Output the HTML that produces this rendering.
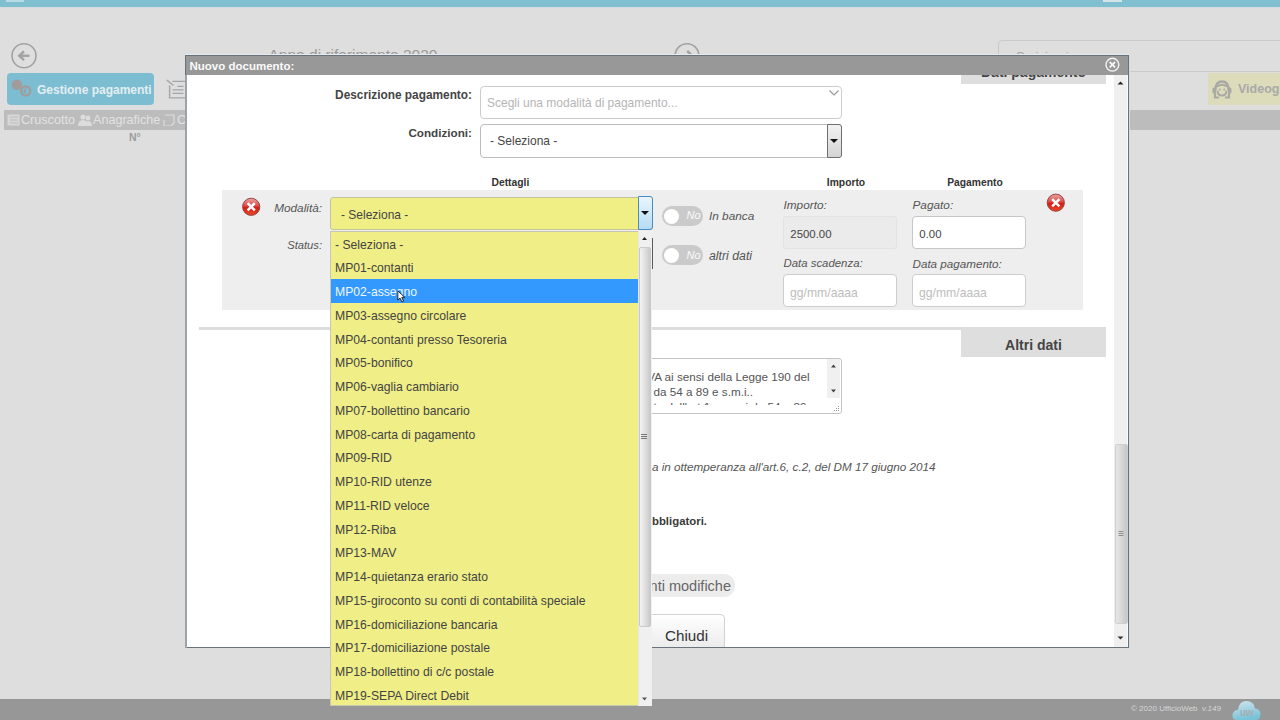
<!DOCTYPE html>
<html><head><meta charset="utf-8">
<style>
*{box-sizing:border-box;margin:0;padding:0}
html,body{width:1280px;height:720px;overflow:hidden;background:#dedede;font-family:"Liberation Sans",sans-serif;}
.a{position:absolute}
.t{position:absolute;white-space:pre;line-height:1}
</style></head><body>
<!-- ===== background page ===== -->
<div class="a" style="left:0;top:0;width:1280px;height:7px;background:#80bfcf"></div>
<div class="a" style="left:6px;top:0;width:18px;height:2px;background:#b9dde6"></div>
<div class="a" style="left:1103px;top:0;width:19px;height:2px;background:#d4e4e8"></div>
<div class="a" style="left:0;top:7px;width:1280px;height:1px;background:#d6dcde"></div>

<!-- back circle -->
<svg class="a" style="left:8.75px;top:41px" width="30" height="30" viewBox="0 0 30 30">
 <circle cx="15" cy="14.75" r="12" fill="none" stroke="#a2a2a2" stroke-width="1.6"/>
 <path d="M10.5 14.75 H20.5" fill="none" stroke="#a2a2a2" stroke-width="2.4"/>
 <path d="M15 10.3 L10.2 14.75 L15 19.2" fill="none" stroke="#a2a2a2" stroke-width="2.4"/>
</svg>
<div class="t" style="left:268.5px;top:47.3px;font-size:15.5px;color:#9a9a9a">Anno di riferimento 2020</div>
<svg class="a" style="left:672px;top:40px" width="30" height="30" viewBox="0 0 30 30">
 <circle cx="15" cy="15.5" r="11.8" fill="none" stroke="#a2a2a2" stroke-width="1.6"/>
 <path d="M9.5 15.5 H19.8" fill="none" stroke="#a2a2a2" stroke-width="2.4"/><path d="M15.2 11 L20 15.5 L15.2 20" fill="none" stroke="#a2a2a2" stroke-width="2.4"/>
</svg>
<div class="a" style="left:997.5px;top:39.5px;width:300px;height:32.5px;border:1px solid #c9c9c9;border-radius:4px"></div>
<div class="t" style="left:1016px;top:49.5px;font-size:13px;color:#a5a5a5">Scrivi qui...</div>

<div class="a" style="left:7px;top:73px;width:147px;height:31.5px;background:#7cbdd1;border-radius:4px"></div>
<svg class="a" style="left:10px;top:78px" width="26" height="22" viewBox="0 0 26 22">
 <circle cx="6.8" cy="6.7" r="5.2" fill="#a39b9b"/>
 <circle cx="15.75" cy="12.9" r="6" fill="#7cbdd1"/>
 <circle cx="15.75" cy="12.9" r="4.6" fill="none" stroke="#a39b9b" stroke-width="2.2"/>
 <path d="M16.5 10.5 Q14.3 10.3 14.3 12.9 Q14.3 15.5 16.5 15.3 M13.5 12.2 H16 M13.5 13.6 H16" fill="none" stroke="#a39b9b" stroke-width="0.9"/>
</svg>
<div class="t" style="left:37px;top:84px;font-size:12px;font-weight:bold;color:#e4eef1">Gestione pagamenti</div>
<svg class="a" style="left:166px;top:79px" width="20" height="20" viewBox="0 0 20 20">
 <path d="M6.5 2.4 H20 M3.6 6.5 V18.9 H20" fill="none" stroke="#a5a5a5" stroke-width="1.4"/>
 <path d="M0.8 1 L7.5 6.5" stroke="#a5a5a5" stroke-width="1.5"/>
 <path d="M11.5 7.3 H17.5 M6.5 10.9 H17.5 M6.5 14.3 H17.5" stroke="#a5a5a5" stroke-width="1.3"/>
</svg>
<div class="a" style="left:4px;top:110px;width:1276px;height:20px;background:#bcbcbc"></div>
<svg class="a" style="left:7px;top:114px" width="13" height="12" viewBox="0 0 13 12"><rect x="0.5" y="0.5" width="12" height="11" fill="#d8d8d8"/><path d="M3 3H11M3 6H11M3 9H11" stroke="#bcbcbc"/></svg>
<div class="t" style="left:21px;top:114px;font-size:12.6px;color:#e2e2e2">Cruscotto</div>
<svg class="a" style="left:78px;top:114px" width="14" height="12" viewBox="0 0 14 12"><circle cx="5" cy="3" r="2.6" fill="#dcdcdc"/><circle cx="10" cy="4" r="2.4" fill="#dcdcdc"/><path d="M0 12 Q0 6 5 6 Q10 6 10 12Z M7 12 Q8 7 10 7 Q14 7 14 12Z" fill="#dcdcdc"/></svg>
<div class="t" style="left:93px;top:114px;font-size:12.6px;color:#e2e2e2">Anagrafiche</div>
<svg class="a" style="left:162px;top:114px" width="14" height="12" viewBox="0 0 14 12"><path d="M3 1H12V9L9 12H2V6" fill="none" stroke="#dcdcdc" stroke-width="1.2"/></svg>
<div class="t" style="left:177px;top:114px;font-size:12.6px;color:#e2e2e2">C</div>
<div class="t" style="left:129px;top:132px;font-size:10.5px;font-weight:bold;color:#9c9c9c">N°</div>

<div class="a" style="left:1208px;top:72.5px;width:80px;height:32px;background:#dcdcba"></div>
<svg class="a" style="left:1211px;top:78px" width="22" height="22" viewBox="0 0 22 22">
 <path d="M4.5 12 Q4.5 3.5 11 3.5 Q17.5 3.5 17.5 12" fill="none" stroke="#a9a9a4" stroke-width="2.4"/>
 <rect x="1.5" y="9.5" width="3.5" height="6" rx="1.5" fill="#a9a9a4"/><rect x="17" y="9.5" width="3.5" height="6" rx="1.5" fill="#a9a9a4"/>
 <path d="M6.5 12.5 Q6.5 17.5 11 17.5 Q15.5 17.5 15.5 12.5" fill="none" stroke="#a9a9a4" stroke-width="2"/>
 <path d="M6 8.5 Q11 5 16 8.5" fill="none" stroke="#a9a9a4" stroke-width="2"/>
 <circle cx="8.8" cy="11.5" r="1" fill="#a9a9a4"/><circle cx="13.2" cy="11.5" r="1" fill="#a9a9a4"/>
 <path d="M4 15 V19.5 H8 M18 15 V19.5 H14" fill="none" stroke="#a9a9a4" stroke-width="2.2"/>
</svg>
<div class="t" style="left:1238px;top:83px;font-size:12.5px;font-weight:bold;color:#a9a9a9">Videoguida</div>

<div class="a" style="left:0;top:699px;width:1280px;height:21px;background:#979797"></div>
<div class="t" style="left:1131px;top:705px;font-size:8px;color:#d6d6d6">© 2020 UfficioWeb &nbsp;<i>v.149</i></div>
<svg class="a" style="left:1232px;top:699px" width="29" height="21" viewBox="0 0 29 21">
 <defs><linearGradient id="cg" x1="0" y1="0" x2="0.3" y2="1"><stop offset="0" stop-color="#d2e6ec"/><stop offset="1" stop-color="#78c3d8"/></linearGradient></defs>
 <path d="M5 21 Q0 21 0.5 15.5 Q1.5 11 6 11 Q7 2 14.5 2 Q22 2 23 9.5 Q28.5 10 28.5 15.5 Q28.5 21 23 21Z" fill="url(#cg)"/>
 <text x="14.5" y="17" font-size="10" font-weight="bold" text-anchor="middle" fill="#a6aeb2" font-family="Liberation Sans" letter-spacing="-0.5">uw</text>
</svg>

<!-- ===== dialog ===== -->
<div class="a" style="left:185px;top:55px;width:944px;height:593px;background:#fff;border:1px solid #6a737b;box-shadow:0 -1px 0 #e6eaed, 1px 0 0 #d5dade"></div>
<div class="a" style="left:186px;top:56px;width:942px;height:19px;background:#989898"></div>
<div class="t" style="left:189.5px;top:61px;font-size:11.5px;font-weight:bold;color:#fafafa">Nuovo documento:</div>
<svg class="a" style="left:1103px;top:56.3px" width="18" height="18" viewBox="0 0 18 18">
 <circle cx="9.4" cy="8.7" r="6.4" fill="none" stroke="#f4f4f4" stroke-width="1.4"/>
 <path d="M6.7 6 L12.1 11.4 M12.1 6 L6.7 11.4" stroke="#f4f4f4" stroke-width="1.8"/>
</svg>
<!-- CONTENT -->
<div class="a" style="left:186px;top:75px;width:928px;height:572px;overflow:hidden">
 <div class="a" style="left:775px;top:-22px;width:145px;height:31px;background:#dedede"></div>
 <div class="t" style="left:775px;top:-9.7px;width:145px;text-align:center;font-size:14px;font-weight:bold;color:#444">Dati pagamento</div>
</div>
<div class="t" style="left:300px;top:89.6px;width:172px;text-align:right;font-size:11.85px;font-weight:bold;color:#444">Descrizione pagamento:</div>
<div class="a" style="left:479.5px;top:85.5px;width:362px;height:33px;border:1px solid #cccccc;border-radius:4px;background:#fff"></div>
<div class="t" style="left:486.5px;top:97px;font-size:12.9px;transform:scaleX(0.93);transform-origin:0 0;color:#b5b5b5">Scegli una modalità di pagamento...</div>
<svg class="a" style="left:828px;top:89px" width="12" height="8" viewBox="0 0 12 8"><path d="M1.5 1.5 L6 6 L10.5 1.5" fill="none" stroke="#9a9a9a" stroke-width="1.2"/></svg>
<div class="t" style="left:300px;top:126.5px;width:172px;text-align:right;font-size:11.7px;font-weight:bold;color:#444">Condizioni:</div>
<div class="a" style="left:479.5px;top:123.5px;width:362px;height:34px;border:1px solid #bdbdbd;border-radius:4px;background:#fff"></div>
<div class="t" style="left:490px;top:134.5px;font-size:12.9px;transform:scaleX(0.93);transform-origin:0 0;color:#444">- Seleziona -</div>
<div class="a" style="left:827px;top:124px;width:14.5px;height:33.5px;border:1px solid #6f6f6f;border-radius:0 3px 3px 0;background:linear-gradient(#f2f2f2,#d4d4d4)"></div>
<svg class="a" style="left:830px;top:138px" width="8" height="6" viewBox="0 0 8 6"><path d="M0 1 H8 L4 5Z" fill="#111"/></svg>

<div class="t" style="left:491.5px;top:178px;font-size:10.3px;font-weight:bold;color:#333">Dettagli</div>
<div class="t" style="left:796px;top:178px;width:100px;text-align:center;font-size:10.3px;font-weight:bold;color:#333">Importo</div>
<div class="t" style="left:925px;top:178px;width:100px;text-align:center;font-size:10.3px;font-weight:bold;color:#333">Pagamento</div>

<div class="a" style="left:222px;top:189.5px;width:860.5px;height:120px;background:#eeeeee"></div>
<svg class="a" style="left:240px;top:196px" width="22" height="22" viewBox="0 0 22 22">
 <defs><linearGradient id="rg" x1="0" y1="0" x2="0" y2="1"><stop offset="0" stop-color="#e8a6a6"/><stop offset="0.45" stop-color="#de4a48"/><stop offset="0.55" stop-color="#d21c14"/><stop offset="1" stop-color="#ee4a2a"/></linearGradient></defs>
 <circle cx="11.2" cy="10.8" r="8.6" fill="url(#rg)" stroke="#8e3a3a" stroke-width="0.9"/>
 <path d="M7.6 7.2 L14.8 14.4 M14.8 7.2 L7.6 14.4" stroke="#fff" stroke-width="2.5"/>
</svg>
<svg class="a" style="left:1045px;top:192px" width="22" height="22" viewBox="0 0 22 22">
 <circle cx="10.8" cy="10.7" r="8.6" fill="url(#rg)" stroke="#8e3a3a" stroke-width="0.9"/>
 <path d="M7.2 7.1 L14.4 14.3 M14.4 7.1 L7.2 14.3" stroke="#fff" stroke-width="2.5"/>
</svg>
<div class="t" style="left:222px;top:203.3px;width:100px;text-align:right;font-size:11.8px;font-style:italic;color:#555">Modalità:</div>
<div class="t" style="left:222px;top:240px;width:100px;text-align:right;font-size:11.2px;font-style:italic;color:#555">Status:</div>

<div class="a" style="left:330px;top:196.5px;width:322.5px;height:33.5px;background:#f0ef86;border:1px solid #c2c29c;border-radius:3px"></div>
<div class="t" style="left:341px;top:209px;font-size:12.9px;transform:scaleX(0.93);transform-origin:0 0;color:#444">- Seleziona -</div>
<div class="a" style="left:638px;top:196px;width:14.5px;height:34px;border:1px solid #4a8bc0;border-radius:0 3px 3px 0;background:linear-gradient(#eaf5fc,#b5dcf4)"></div>
<svg class="a" style="left:641px;top:210px" width="8" height="6" viewBox="0 0 8 6"><path d="M0 1 H8 L4 5Z" fill="#111"/></svg>
<div class="a" style="left:652px;top:238px;width:1px;height:31px;background:#5a5a5a"></div>

<div class="a" style="left:661.5px;top:206px;width:41px;height:20.3px;border-radius:10px;background:#cacaca"></div>
<div class="a" style="left:663.5px;top:208.5px;width:15px;height:15px;border-radius:50%;background:#fff"></div>
<div class="t" style="left:686.5px;top:210px;font-size:11px;font-style:italic;color:#fafafa">No</div>
<div class="t" style="left:709px;top:211px;font-size:11.8px;font-style:italic;color:#555">In banca</div>
<div class="a" style="left:661.5px;top:245.3px;width:41px;height:20px;border-radius:10px;background:#cacaca"></div>
<div class="a" style="left:663.5px;top:247.8px;width:15px;height:15px;border-radius:50%;background:#fff"></div>
<div class="t" style="left:686.5px;top:249.5px;font-size:11px;font-style:italic;color:#fafafa">No</div>
<div class="t" style="left:709px;top:250px;font-size:12.3px;font-style:italic;color:#555">altri dati</div>

<div class="t" style="left:783.5px;top:199.5px;font-size:11.8px;font-style:italic;color:#555">Importo:</div>
<div class="a" style="left:783px;top:215.5px;width:113.5px;height:33.5px;background:#ebebeb;border:1px solid #e3e3e3;border-radius:3px"></div>
<div class="t" style="left:790.3px;top:228.5px;font-size:11.4px;color:#444">2500.00</div>
<div class="t" style="left:783.5px;top:257.5px;font-size:11.4px;font-style:italic;color:#555">Data scadenza:</div>
<div class="a" style="left:783px;top:274px;width:113.5px;height:32.5px;background:#fff;border:1px solid #cdcdcd;border-radius:4px"></div>
<div class="t" style="left:790px;top:286.5px;font-size:12.2px;color:#bdbdbd">gg/mm/aaaa</div>

<div class="t" style="left:912.5px;top:199.5px;font-size:11.8px;font-style:italic;color:#555">Pagato:</div>
<div class="a" style="left:912px;top:215.5px;width:113.5px;height:33.5px;background:#fff;border:1px solid #c6c6c6;border-radius:4px"></div>
<div class="t" style="left:919.3px;top:228.5px;font-size:11.4px;color:#444">0.00</div>
<div class="t" style="left:912.5px;top:257.5px;font-size:11.65px;font-style:italic;color:#555">Data pagamento:</div>
<div class="a" style="left:912px;top:274px;width:113.5px;height:32.5px;background:#fff;border:1px solid #cdcdcd;border-radius:4px"></div>
<div class="t" style="left:919px;top:286.5px;font-size:12.2px;color:#bdbdbd">gg/mm/aaaa</div>

<div class="a" style="left:199px;top:327px;width:762px;height:3px;background:#dcdcdc"></div>
<div class="a" style="left:961px;top:327px;width:145px;height:30px;background:#dedede"></div>
<div class="t" style="left:961px;top:337.5px;width:145px;text-align:center;font-size:14px;font-weight:bold;color:#444">Altri dati</div>

<div class="a" style="left:479.5px;top:358px;width:362px;height:56px;border:1px solid #c4c4c4;border-radius:3px;background:#fff"></div>
<div class="a" style="left:480.5px;top:359px;width:346px;height:46.3px;overflow:hidden">
 <div class="t" style="left:0;top:11.5px;width:329px;text-align:right;font-size:11.7px;color:#555">Scissione dei pagamenti IVA ai sensi della Legge 190 del</div>
 <div class="t" style="left:0;top:26.8px;width:272.5px;text-align:right;font-size:11.7px;color:#555">art.17 ter commi da 54 a 89 e s.m.i..</div>
 <div class="t" style="left:0;top:42.1px;width:326px;text-align:right;font-size:11.7px;color:#555">come modificato dall'art.1 commi da 54 a 89</div>
</div>
<div class="a" style="left:827px;top:359px;width:13px;height:39px;background:#f0f0f0"></div>
<svg class="a" style="left:829px;top:361px" width="9" height="36" viewBox="0 0 9 36"><path d="M2 6.5 H7 L4.5 3.5Z M2 28.5 H7 L4.5 31.5Z" fill="#444"/></svg>
<svg class="a" style="left:832px;top:405px" width="8" height="8" viewBox="0 0 8 8"><g fill="#9a9a9a"><rect x="6" y="1" width="1" height="1"/><rect x="4" y="3" width="1" height="1"/><rect x="6" y="3" width="1" height="1"/><rect x="2" y="5" width="1" height="1"/><rect x="4" y="5" width="1" height="1"/><rect x="6" y="5" width="1" height="1"/></g></svg>

<div class="t" style="left:652px;top:460.5px;font-size:11.7px;font-style:italic;color:#555">a in ottemperanza all'art.6, c.2, del DM 17 giugno 2014</div>
<div class="t" style="left:500px;top:515.7px;width:207px;text-align:right;font-size:11.4px;font-weight:bold;color:#3a3a3a">campi obbligatori.</div>

<div class="a" style="left:560px;top:574.4px;width:174.5px;height:23px;border-radius:11px;background:#ececec"></div>
<div class="t" style="left:500px;top:578.5px;width:231px;text-align:right;font-size:14.5px;color:#666">Annulla recenti modifiche</div>
<div class="a" style="left:560px;top:614.4px;width:165px;height:33px;border:1px solid #d2d2d2;border-bottom:none;border-radius:5px 5px 0 0;background:linear-gradient(#fff,#ececec)"></div>
<div class="t" style="left:665px;top:627.5px;font-size:15.2px;color:#333">Chiudi</div>

<!-- SCROLL -->
<div class="a" style="left:1114px;top:75px;width:14px;height:572px;background:#efefef;border-right:1px solid #fafafa"></div>
<svg class="a" style="left:1116px;top:79px" width="9" height="8" viewBox="0 0 9 8"><path d="M1.5 5.5 H7.5 L4.5 2.5Z" fill="#222"/></svg>
<div class="a" style="left:1114.5px;top:444px;width:13.5px;height:180px;border:1px solid #cfcfcf;border-radius:2px;background:linear-gradient(90deg,#e6e6e6,#d6d6d6 55%,#c6c6c6)"></div>
<svg class="a" style="left:1117px;top:530px" width="8" height="8" viewBox="0 0 8 8"><path d="M1.5 1.5H6.5M1.5 3.5H6.5M1.5 5.5H6.5" stroke="#888" stroke-width="0.9"/></svg>
<svg class="a" style="left:1116px;top:634px" width="9" height="8" viewBox="0 0 9 8"><path d="M1.5 2.5 H7.5 L4.5 5.5Z" fill="#333"/></svg>
<div class="a" style="left:185px;top:75px;width:2px;height:573px;background:#9ea3a7"></div>
<!-- DROPDOWN -->
<div class="a" style="left:329.5px;top:231px;width:322px;height:475px;background:#f0ee86;border:1px solid #c6c6b4;border-right:none"></div>
<div class="t" style="left:335.3px;top:238.50px;font-size:12.9px;transform:scaleX(0.945);transform-origin:0 0;color:#444">- Seleziona -</div>
<div class="t" style="left:335.3px;top:262.25px;font-size:12.9px;transform:scaleX(0.945);transform-origin:0 0;color:#444">MP01-contanti</div>
<div class="a" style="left:330.5px;top:279.25px;width:307px;height:23.6px;background:#3399ff"></div>
<div class="t" style="left:335.3px;top:286.00px;font-size:12.9px;transform:scaleX(0.945);transform-origin:0 0;color:#eef7ff">MP02-assegno</div>
<div class="t" style="left:335.3px;top:309.75px;font-size:12.9px;transform:scaleX(0.945);transform-origin:0 0;color:#444">MP03-assegno circolare</div>
<div class="t" style="left:335.3px;top:333.50px;font-size:12.9px;transform:scaleX(0.945);transform-origin:0 0;color:#444">MP04-contanti presso Tesoreria</div>
<div class="t" style="left:335.3px;top:357.25px;font-size:12.9px;transform:scaleX(0.945);transform-origin:0 0;color:#444">MP05-bonifico</div>
<div class="t" style="left:335.3px;top:381.00px;font-size:12.9px;transform:scaleX(0.945);transform-origin:0 0;color:#444">MP06-vaglia cambiario</div>
<div class="t" style="left:335.3px;top:404.75px;font-size:12.9px;transform:scaleX(0.945);transform-origin:0 0;color:#444">MP07-bollettino bancario</div>
<div class="t" style="left:335.3px;top:428.50px;font-size:12.9px;transform:scaleX(0.945);transform-origin:0 0;color:#444">MP08-carta di pagamento</div>
<div class="t" style="left:335.3px;top:452.25px;font-size:12.9px;transform:scaleX(0.945);transform-origin:0 0;color:#444">MP09-RID</div>
<div class="t" style="left:335.3px;top:476.00px;font-size:12.9px;transform:scaleX(0.945);transform-origin:0 0;color:#444">MP10-RID utenze</div>
<div class="t" style="left:335.3px;top:499.75px;font-size:12.9px;transform:scaleX(0.945);transform-origin:0 0;color:#444">MP11-RID veloce</div>
<div class="t" style="left:335.3px;top:523.50px;font-size:12.9px;transform:scaleX(0.945);transform-origin:0 0;color:#444">MP12-Riba</div>
<div class="t" style="left:335.3px;top:547.25px;font-size:12.9px;transform:scaleX(0.945);transform-origin:0 0;color:#444">MP13-MAV</div>
<div class="t" style="left:335.3px;top:571.00px;font-size:12.9px;transform:scaleX(0.945);transform-origin:0 0;color:#444">MP14-quietanza erario stato</div>
<div class="t" style="left:335.3px;top:594.75px;font-size:12.9px;transform:scaleX(0.945);transform-origin:0 0;color:#444">MP15-giroconto su conti di contabilità speciale</div>
<div class="t" style="left:335.3px;top:618.50px;font-size:12.9px;transform:scaleX(0.945);transform-origin:0 0;color:#444">MP16-domiciliazione bancaria</div>
<div class="t" style="left:335.3px;top:642.25px;font-size:12.9px;transform:scaleX(0.945);transform-origin:0 0;color:#444">MP17-domiciliazione postale</div>
<div class="t" style="left:335.3px;top:666.00px;font-size:12.9px;transform:scaleX(0.945);transform-origin:0 0;color:#444">MP18-bollettino di c/c postale</div>
<div class="t" style="left:335.3px;top:689.75px;font-size:12.9px;transform:scaleX(0.945);transform-origin:0 0;color:#444">MP19-SEPA Direct Debit</div>
<div class="a" style="left:638px;top:231px;width:13.5px;height:475px;background:#f0f0f0;border-left:1px solid #e6e6e6"></div>
<svg class="a" style="left:640px;top:234px" width="9" height="8" viewBox="0 0 9 8"><path d="M2 6 H7 L4.5 3Z" fill="#222"/></svg>
<div class="a" style="left:638.5px;top:247px;width:12.5px;height:380px;border:1px solid #c9c9c9;border-radius:2px;background:linear-gradient(90deg,#f3f3f3,#dcdcdc 60%,#c9c9c9)"></div>
<svg class="a" style="left:640px;top:433px" width="8" height="8" viewBox="0 0 8 8"><path d="M1 1.5H7M1 3.5H7M1 5.5H7" stroke="#777" stroke-width="1"/></svg>
<svg class="a" style="left:640px;top:695px" width="9" height="8" viewBox="0 0 9 8"><path d="M2 2.5 H7 L4.5 5.5Z" fill="#555"/></svg>
<svg class="a" style="left:396.5px;top:289.5px" width="10" height="14" viewBox="0 0 10 14"><path d="M0.8 0.8 L0.8 10 L3 8 L5 12 L6.6 11.2 L4.8 7.4 L7.8 7.4 Z" fill="#fff" stroke="#111" stroke-width="0.9"/></svg>

</body></html>
